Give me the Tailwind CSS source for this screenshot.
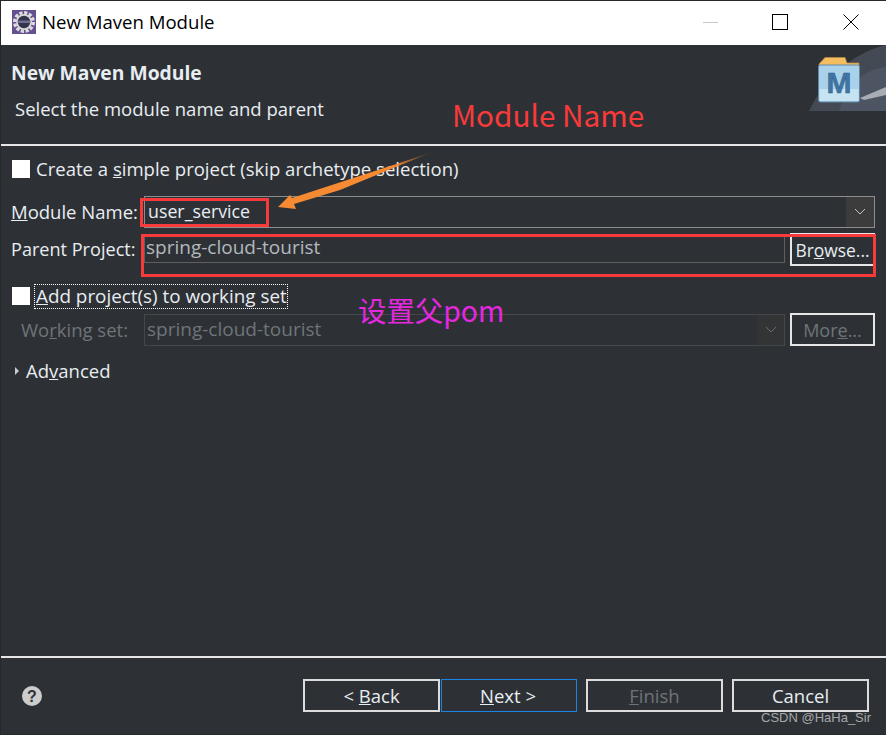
<!DOCTYPE html>
<html lang="en">
<head>
  <meta charset="UTF-8" />
  <title>New Maven Module</title>
  <script src="https://cdn.jsdelivr.net/npm/@tailwindcss/browser@4"></script>
</head>
<body class="bg-[#2d3135]">
<div class="relative w-[886px] h-[735px] overflow-hidden bg-[#2d3135] border border-[#26292c] border-r-0 font-['Open_Sans','Noto_Sans',sans-serif] text-[18.5px] text-[#e8edf2] flex flex-col">

  <!-- Title bar -->
  <header class="h-[44px] shrink-0 bg-white text-black flex items-center pl-[11px] pb-[2px]">
    <svg width="24" height="24" viewBox="0 0 24 24">
      <rect width="24" height="24" fill="#654f8f" />
      <circle cx="12" cy="12" r="9.2" fill="none" stroke="#dcdcdc" stroke-width="3.6" stroke-dasharray="3.2 1.6" />
      <circle cx="12" cy="12" r="8" fill="#d6d6d6" />
      <circle cx="12" cy="12" r="6.2" fill="#34344a" />
      <rect x="5.8" y="10.5" width="12.4" height="2.5" fill="#6f6d92" />
    </svg>
    <span class="ml-[6px] text-[18.6px]">New Maven Module</span>
    <div class="ml-auto flex items-center">
      <span class="w-[15px] h-px bg-[#c8c8c8] mr-[54px]"></span>
      <span class="w-[16px] h-[16px] border border-black mr-[55px]"></span>
      <svg width="16" height="16" viewBox="0 0 16 16" class="mr-[27px]"><path d="M0.5 0.5L15.5 15.5M15.5 0.5L0.5 15.5" stroke="#000" stroke-width="1" /></svg>
    </div>
  </header>

  <!-- Wizard banner -->
  <section class="relative h-[101px] shrink-0 border-b-2 border-[#e6e6e6] pl-[10px]">
    <h1 class="pt-[15px] font-bold text-[19.3px] leading-[26px]">New Maven Module</h1>
    <p class="pl-[4px] pt-[10px] leading-[26px]">Select the module name and parent</p>
    <svg class="absolute right-0 top-0" width="77" height="66" viewBox="0 0 77 66">
      <path d="M0 66C14 36 42 8 77 0V66Z" fill="#444a54" />
      <path d="M30 66C38 40 56 24 77 22V66Z" fill="#4e5562" />
      <path d="M51 53L77 42V50L55 55Z" fill="#a8adb3" />
      <path d="M10 19L16 12.5H36L38 18H50V22H10Z" fill="#f5bd62" stroke="#b98b3c" stroke-width="0.7" />
      <rect x="9.5" y="20" width="41" height="37" rx="2" fill="#a9d2ea" stroke="#5f88a8" />
      <rect x="10.5" y="44" width="39" height="12" fill="#c5e3f0" />
      <text x="30" y="48" text-anchor="middle" font-family="Liberation Sans" font-weight="700" font-size="30" fill="#3f76a6" stroke="#33597f" stroke-width="0.5">M</text>
    </svg>
  </section>

  <!-- Form -->
  <main class="flex-1 pl-[11px] pr-[11px]">
    <label class="flex items-center h-[18px] mt-[14px]">
      <span class="w-[18px] h-[18px] bg-white"></span>
      <span class="ml-[6px] text-[18.55px]">Create a <u>s</u>imple project (skip archetype selection)</span>
    </label>

    <div class="flex items-center mt-[18px] h-[32px]">
      <span class="w-[132px] shrink-0 -ml-px mr-px"><u>M</u>odule Name:</span>
      <div class="flex-1 h-[32px] border border-[#8d8d8d] flex justify-between">
        <span class="pl-[3px] text-[17.8px] leading-[29px]">user_service</span>
        <span class="w-[28px] bg-[#3c3c3c] flex items-center justify-center">
          <svg width="12" height="8" viewBox="0 0 12 8"><path d="M1 1L6 6L11 1" fill="none" stroke="#c4c4c4" stroke-width="1" /></svg>
        </span>
      </div>
    </div>

    <div class="flex mt-[5px] h-[34px]">
      <span class="w-[132px] shrink-0 -ml-px mr-px text-[18.1px] leading-[32px]">Parent Project:</span>
      <div class="flex-1 h-[26px] mt-[4px] border border-[#5f5f5f] border-t-0 pl-[1px] text-[19px] leading-[20px] text-[#b4b8bc]">spring-cloud-tourist</div>
      <button class="ml-[5px] w-[85px] h-[33px] border-2 border-[#e6e6e6] text-[17.4px] leading-[28px]">Br<u>o</u>wse...</button>
    </div>

    <label class="flex items-center h-[18px] mt-[20px]">
      <span class="w-[18px] h-[18px] bg-white"></span>
      <span class="ml-[5px] h-[23px] pl-px text-[18.85px] leading-[23px] outline-1 outline-dotted outline-white"><u>A</u>dd project(s) to working set</span>
    </label>

    <div class="flex items-center mt-[8px] h-[33px] text-[#6f7479]">
      <span class="w-[132px] shrink-0 pl-[9px]">Wo<u>r</u>king set:</span>
      <div class="w-[641px] h-[32px] border border-[#45484b] flex justify-between">
        <span class="pl-[2px] text-[19px] leading-[29px]">spring-cloud-tourist</span>
        <span class="w-[27px] bg-[#333436] flex items-center justify-center">
          <svg width="12" height="8" viewBox="0 0 12 8"><path d="M1 1L6 6L11 1" fill="none" stroke="#6b6b6b" stroke-width="1" /></svg>
        </span>
      </div>
      <button class="ml-[5px] w-[85px] h-[33px] border-2 border-[#e6e6e6] text-[18px] leading-[28px]">Mor<u>e</u>...</button>
    </div>

    <div class="flex items-center mt-[12px] h-[26px]">
      <svg width="6" height="10" viewBox="0 0 6 10" class="ml-[2px]"><path d="M1 1L5 5L1 9Z" fill="#c8ccd0" /></svg>
      <span class="ml-[6px]">Ad<u>v</u>anced</span>
    </div>
  </main>

  <!-- Button bar -->
  <footer class="h-[78px] shrink-0 border-t-2 border-[#e6e6e6] flex items-start pt-[21px] pl-[21px]">
    <svg width="20" height="20" viewBox="0 0 20 20" class="mt-[7px]">
      <circle cx="10" cy="10" r="10" fill="#cccccc" />
      <text x="10" y="15.5" text-anchor="middle" font-family="Liberation Sans" font-weight="700" font-size="16" fill="#2d3135">?</text>
    </svg>
    <div class="ml-[261px] flex">
      <button class="w-[137px] h-[33px] border-2 border-[#dcdcdc]">&lt; <u>B</u>ack</button>
      <button class="ml-px w-[136px] h-[33px] border border-[#1a86e4] pr-[2px]"><u>N</u>ext &gt;</button>
      <button class="ml-[9px] w-[137px] h-[33px] border-2 border-[#dcdcdc] text-[18.5px] text-[#6f7479]"><u>F</u>inish</button>
      <button class="ml-[9px] w-[137px] h-[33px] border-2 border-[#dcdcdc]">Cancel</button>
    </div>
  </footer>

  <!-- Screenshot annotations -->
  <div class="absolute left-[139px] top-[197px] w-[129px] h-[29px] border-[3px] border-[#f93a3a]"></div>
  <div class="absolute left-[140px] top-[233px] w-[735px] h-[43px] border-[3px] border-[#f93a3a]"></div>
  <svg class="absolute left-[-1px] top-[-1px] pointer-events-none" width="886" height="735">
    <defs>
      <linearGradient id="tail" x1="278" y1="207" x2="430" y2="153" gradientUnits="userSpaceOnUse">
        <stop offset="0" stop-color="#f58a33" />
        <stop offset="0.75" stop-color="#f58a33" />
        <stop offset="1" stop-color="#f58a33" stop-opacity="0.1" />
      </linearGradient>
    </defs>
    <path d="M278 207L290 195L292 198L430 153L340 190L294 204L296 209Z" fill="url(#tail)" />
  </svg>
  <span class="absolute left-[451px] top-[93px] font-['Noto_Sans_CJK_SC','Noto_Sans',sans-serif] text-[29.7px] leading-[42px] text-[#f93a3a]">Module Name</span>
  <span class="absolute left-[357px] top-[290px] font-['Noto_Sans_CJK_SC','Noto_Sans',sans-serif] text-[28.4px] leading-[38px] text-[#e528e0]">设置父pom</span>
  <span class="absolute left-[760px] top-[709px] font-['Liberation_Sans',sans-serif] text-[13px] leading-[16px] text-[#a5a8ab]">CSDN @HaHa_Sir</span>
</div>
</body>
</html>
